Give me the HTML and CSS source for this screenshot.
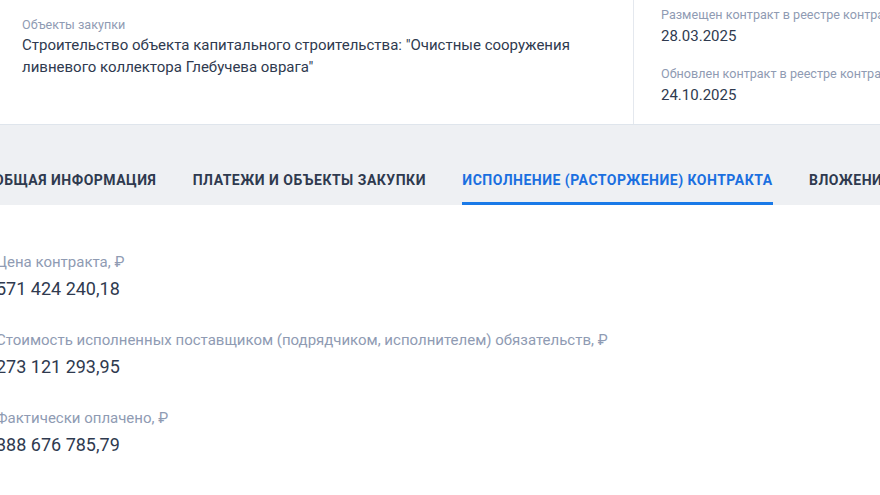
FILE: index.html
```html
<!DOCTYPE html>
<html lang="ru">
<head>
<meta charset="utf-8">
<title>Контракт</title>
<link rel="stylesheet" href="styles.css">
</head>
<body>
<div class="page">
  <header class="head">
    <div class="head-main">
      <div class="label">Объекты закупки</div>
      <div class="title">Строительство объекта капитального строительства: "Очистные сооружения ливневого коллектора Глебучева оврага"</div>
    </div>
    <div class="head-side">
      <div class="side-item">
        <div class="label">Размещен контракт в реестре контрактов</div>
        <div class="date">28.03.2025</div>
      </div>
      <div class="side-item">
        <div class="label">Обновлен контракт в реестре контрактов</div>
        <div class="date">24.10.2025</div>
      </div>
    </div>
  </header>
  <nav class="tabs">
    <div class="tab">Общая информация</div>
    <div class="tab">Платежи и объекты закупки</div>
    <div class="tab active">Исполнение (расторжение) контракта</div>
    <div class="tab">Вложения</div>
  </nav>
  <main class="content">
    <div class="field">
      <div class="f-label">Цена контракта, ₽</div>
      <div class="f-value">571 424 240,18</div>
    </div>
    <div class="field">
      <div class="f-label">Стоимость исполненных поставщиком (подрядчиком, исполнителем) обязательств, ₽</div>
      <div class="f-value">273 121 293,95</div>
    </div>
    <div class="field">
      <div class="f-label">Фактически оплачено, ₽</div>
      <div class="f-value">388 676 785,79</div>
    </div>
  </main>
</div>
</body>
</html>
```
FILE: styles.css
```css
html, body {
  margin: 0;
  padding: 0;
  background: #ffffff;
  overflow: hidden;
}
body {
  font-family: Roboto, "Noto Sans", "Liberation Sans", sans-serif;
  color: #2f3a4f;
  width: 880px;
  height: 495px;
}
.page {
  width: 880px;
}
.head {
  display: flex;
  height: 124px;
  border-bottom: 1px solid #dfe5ec;
  background: #fff;
}
.head-main {
  width: 611px;
  padding: 16px 0 0 22px;
  border-right: 1px solid #e4e8ee;
  flex: none;
}
.label {
  font-size: 12.6px;
  line-height: 18px;
  color: #8f9bb3;
}
.title {
  font-size: 15px;
  line-height: 22px;
  color: #2f3a4f;
  margin-top: 0;
  width: 580px;
}
.head-side {
  padding: 6px 0 0 27px;
  white-space: nowrap;
  display: flex;
  flex-direction: column;
  gap: 18px;
}
.date {
  font-size: 15px;
  line-height: 22px;
  color: #2f3a4f;
  margin-top: 1px;
}
.tabs {
  display: flex;
  gap: 36.4px;
  background: #eef0f3;
  height: 80px;
  align-items: flex-end;
  margin-left: -6px;
  padding-left: 0;
  white-space: nowrap;
}
.tab {
  font-size: 14px;
  font-weight: 700;
  text-transform: uppercase;
  letter-spacing: 0.5px;
  color: #2f3a4f;
  line-height: 20px;
  padding-bottom: 12px;
  border-bottom: 3px solid transparent;
}
.tab.active {
  color: #1a6fe0;
  border-bottom-color: #1a7ae8;
}
.content {
  margin-left: -4px;
  padding-top: 47px;
  display: flex;
  flex-direction: column;
  gap: 27px;
}
.f-label {
  font-size: 15px;
  line-height: 20px;
  color: #8f9bb3;
}
.f-value {
  font-size: 18px;
  line-height: 28px;
  color: #2f3a4f;
  margin-top: 3px;
}
```
